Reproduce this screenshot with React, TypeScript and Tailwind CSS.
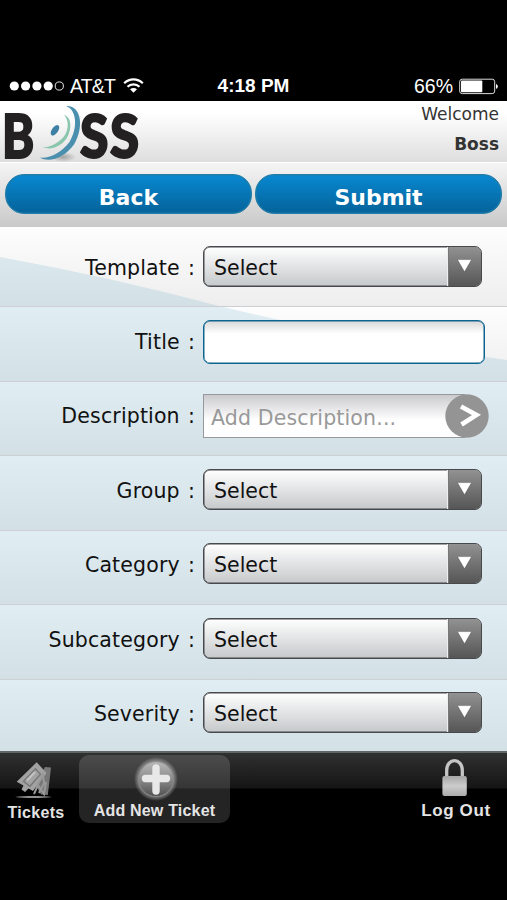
import { useState } from 'react'

interface Field {
  label: string
  kind: 'select' | 'input' | 'link'
}

const fields: Field[] = [
  { label: 'Template', kind: 'select' },
  { label: 'Title', kind: 'input' },
  { label: 'Description', kind: 'link' },
  { label: 'Group', kind: 'select' },
  { label: 'Category', kind: 'select' },
  { label: 'Subcategory', kind: 'select' },
  { label: 'Severity', kind: 'select' },
]

function StatusBar() {
  return (
    <div className="grid h-[101px] grid-cols-3 items-end bg-black px-[9px] pb-[5px] font-['Liberation_Sans'] text-[19.5px] leading-5 text-white">
      <div className="flex items-center whitespace-nowrap">
        <svg width="56" height="12" viewBox="0 0 56 12" fill="#fff">
          <circle cx="5.3" cy="6" r="4.6" />
          <circle cx="16.6" cy="6" r="4.6" />
          <circle cx="27.9" cy="6" r="4.6" />
          <circle cx="39.2" cy="6" r="4.6" />
          <circle cx="50.3" cy="6" r="4.1" fill="none" stroke="#fff" strokeWidth="0.9" />
        </svg>
        <span className="ml-[5px] tracking-[-0.8px]">AT&amp;T</span>
        <svg className="ml-[8px]" width="21" height="16" viewBox="0 0 21 16" fill="none" stroke="#fff" strokeWidth="2.2">
          <path d="M1.2 5.2C6.5.1 14.5.1 19.8 5.2" />
          <path d="M4.5 8.8c3.4-3.3 8.6-3.3 12 0" />
          <path d="M10.5 14.8 7 11.3c2-1.8 5-1.8 7 0z" fill="#fff" stroke="none" />
        </svg>
      </div>
      <div className="text-center text-[19px] font-bold text-white">4:18 PM</div>
      <div className="flex items-center justify-end">
        <span className="mr-[6px]">66%</span>
        <svg width="39" height="17" viewBox="0 0 39 17">
          <rect x="0.7" y="1.2" width="35" height="14.4" rx="2.5" fill="none" stroke="#ddd" />
          <rect x="2" y="2.5" width="21.3" height="11.8" rx="0.8" fill="#fff" />
          <path d="M37 6c2.4.7 2.4 4.1 0 4.8z" fill="#fff" />
        </svg>
      </div>
    </div>
  )
}

function Logo() {
  return (
    <svg className="overflow-visible" width="145" height="61" viewBox="0 0 145 61">
      <defs>
        <radialGradient id="shade">
          <stop offset="0" stopColor="#777" stopOpacity="0.6" />
          <stop offset="1" stopColor="#777" stopOpacity="0" />
        </radialGradient>
      </defs>
      <ellipse cx="63" cy="56" rx="13" ry="5" fill="url(#shade)" />
      <g fontFamily="Lato" fontWeight="900" fontSize="60" fill="#242122" stroke="#242122" strokeWidth="2">
        <text transform="translate(2 57.2) scale(.81 1.02)">B</text>
        <text transform="translate(80 57.2) scale(.86 1.02)">S</text>
        <text transform="translate(110 57.2) scale(.88 1.02)">S</text>
      </g>
      <ellipse cx="55" cy="29.3" rx="3.1" ry="6" transform="rotate(35 55 29.3)" fill="#3e81a5" />
      <path d="M64 14C72 16 72 29 66.500 37.500 61 45 51 50 43 46 50 47 58 42 64 35.500 69 28 69 19 64 14z" fill="#8ac5ad" />
      <path d="M66 5C82 4 84 27 74 43.500 65 56 50 62.500 39.500 56.500 50 58 62 51 69.500 41 78 27 77 9 66 5z" fill="#4b8fae" />
    </svg>
  )
}

function SelectBox({ label }: { label: string }) {
  return (
    <button
      aria-label={label}
      className="flex h-[41px] w-[279px] items-stretch overflow-hidden rounded-[7px] border border-[#48494c] bg-linear-to-b from-white to-[#c6c9cb] text-left shadow-[inset_0_0_0_0.5px_#48494c]"
    >
      <span className="flex-1 pl-[10px] leading-[42px]">Select</span>
      <span className="flex w-[33px] justify-center border-l border-[#77787a] bg-linear-to-b from-[#929292] to-[#565656] pt-[12px] pr-[2px] shadow-[-1px_0_0_#eee]">
        <svg width="15" height="13" viewBox="0 0 15 13">
          <path d="M.4.6h14.2L7.5 12.8z" fill="#fff" stroke="#4a4a4a" strokeWidth="0.4" />
        </svg>
      </span>
    </button>
  )
}

function DescriptionLink() {
  return (
    <button className="flex h-[44px] w-[286px] items-center text-left">
      <span className="h-[44px] w-[262px] border border-[#96989b] bg-linear-to-b from-[#cbcbcf] to-white to-60% pl-[7px] leading-[46px] tracking-[0.15px] text-[#999]">
        Add Description...
      </span>
      <svg className="-ml-[20px] shrink-0" width="44" height="44" viewBox="0 0 44 44">
        <circle cx="22" cy="22" r="21.7" fill="#949494" />
        <path d="M16 12.5 31.5 21 16.5 30.5" fill="none" stroke="#fff" strokeWidth="4.6" />
      </svg>
    </button>
  )
}

function FormRow({ field, first }: { field: Field; first: boolean }) {
  const [value, setValue] = useState('')

  return (
    <div
      className={`relative flex items-start border-b border-[#cdcfd2] bg-linear-to-b from-transparent to-black/6 ${
        first ? 'h-[80.5px] pt-[19px]' : 'h-[74.5px] pt-[12.5px]'
      }`}
    >
      <label className="w-[196px] pr-[1px] text-right leading-[44px] tracking-[0.15px] [word-spacing:1.5px]">{field.label} :</label>
      <div className="ml-[7px]">
        {field.kind === 'select' && <SelectBox label={field.label} />}
        {field.kind === 'input' && (
          <input
            value={value}
            onChange={(e) => setValue(e.target.value)}
            className="block h-[44px] w-[282px] rounded-[7px] border border-[#0e648f] bg-linear-to-b from-[#d8d8d8] to-white to-30% px-2 shadow-[inset_0_0_0_0.5px_#0e648f]"
          />
        )}
        {field.kind === 'link' && <DescriptionLink />}
      </div>
    </div>
  )
}

function TabBar() {
  return (
    <div className="relative flex h-[149px] items-start border-t-2 border-[#606568] bg-[linear-gradient(#303030_0px,#151515_35px,#000_36px)] bg-no-repeat font-['Liberation_Sans'] text-[16px] font-bold leading-[18px] text-[#e4e4e4]">
      <button className="mt-[7px] flex w-[72px] flex-col items-center">
        <svg width="42" height="40" viewBox="0 0 42 40">
          <path d="M30 7 36 7.5 32.8 35 26 34.5 20 24z" fill="#777" />
          <path d="M21.7 2.3 31.5 13 18 31 13.5 28.5 10 32 6.5 29.5 8.5 25.5 1.7 21.7z" fill="#a2a2a2" />
          <path d="m8.5 21.5 12-12.8 5 5.5-10.5 12z" fill="none" stroke="#777" strokeWidth="1.4" />
          <path d="m12 20.5 8-8.5" stroke="#c2c2c2" strokeWidth="2.2" />
          <path d="m22 26 6-11.5 1 8.5-5 10M19 34l4-9 6 9 2-12" stroke="#999" strokeWidth="2" fill="none" />
          <path d="M0 37c10-1.2 26-1.2 37 0-10 1.4-27 1.4-37 0z" fill="#909090" />
        </svg>
        <span className="mt-[4px] tracking-[0.3px]">Tickets</span>
      </button>
      <button className="ml-[7px] mt-[2px] flex h-[68px] w-[151px] flex-col items-center rounded-[10px] bg-white/14">
        <svg width="46" height="46" viewBox="0 0 46 46">
          <defs>
            <radialGradient id="glow">
              <stop offset="0.75" stopColor="#bbb" stopOpacity="0.7" />
              <stop offset="1" stopColor="#bbb" stopOpacity="0" />
            </radialGradient>
            <linearGradient id="disc" x1="0" y1="0" x2="0" y2="1">
              <stop offset="0" stopColor="#b8b8b8" />
              <stop offset="0.5" stopColor="#8c8c8c" />
              <stop offset="1" stopColor="#505050" />
            </linearGradient>
          </defs>
          <circle cx="24" cy="24" r="22" fill="url(#glow)" />
          <circle cx="24" cy="24" r="17.5" fill="url(#disc)" stroke="#888" />
          <path d="M24 13v23M13.5 23.5h21" stroke="#e8e8e8" strokeWidth="7.4" strokeLinecap="round" />
        </svg>
        <span className="mt-[1px] tracking-[0.2px]">Add New Ticket</span>
      </button>
      <button className="ml-auto mt-[5px] flex w-[102px] flex-col items-center">
        <svg width="28" height="40" viewBox="0 0 28 40">
          <defs>
            <linearGradient id="lock" x1="0" y1="0" x2="0" y2="1">
              <stop offset="0" stopColor="#a6a6a6" />
              <stop offset="0.5" stopColor="#ccc" />
              <stop offset="1" stopColor="#aaa" />
            </linearGradient>
          </defs>
          <path d="M4.7 20v-7.5C4.7-.6 20.3-.6 20.3 12.5V20" fill="none" stroke="#c5c5c5" strokeWidth="3.3" />
          <rect x="0.4" y="18" width="24.4" height="20" rx="2" fill="url(#lock)" />
        </svg>
        <span className="mt-[4px] text-[17px] tracking-[0.6px]">Log Out</span>
      </button>
    </div>
  )
}

export default function App() {
  return (
    <div className="h-[900px] w-[507px] overflow-hidden bg-black font-['DejaVu_Sans',sans-serif] text-[20.5px] text-[#111]">
      <StatusBar />

      {/* Header */}
      <div className="flex h-[61px] justify-between bg-linear-to-b from-white from-20% to-[#dedede] pr-[8px]">
        <Logo />
        <div className="text-right text-[17px] leading-[30px] text-[#333]">
          <div className="-mt-[2px]">Welcome</div>
          <div className="font-bold">Boss</div>
        </div>
      </div>

      {/* Actions */}
      <div className="flex h-[64.5px] items-start gap-[3px] border-t border-white bg-linear-to-b from-[#f5f5f5] to-[#c9c9c9] px-[5px] pt-[11px] text-[22px] font-bold leading-[45px] text-white">
        <button className="h-[40px] flex-1 rounded-[19px] border border-[#237da8] bg-linear-to-b from-[#0888d1] to-[#05639a] shadow-[inset_0_0_0_0.5px_#237da8]">Back</button>
        <button className="h-[40px] flex-1 rounded-[19px] border border-[#237da8] bg-linear-to-b from-[#0888d1] to-[#05639a] shadow-[inset_0_0_0_0.5px_#237da8]">Submit</button>
      </div>

      {/* Form */}
      <div className="relative h-[524.5px] overflow-hidden bg-[#e0eef4]">
        <svg className="absolute left-0 top-0" width="507" height="140" viewBox="0 0 507 140">
          <path d="M0 0h507v133Q350 111 215 78 110 50 0 30z" fill="#fdfdfd" />
        </svg>
        {fields.map((field, i) => (
          <FormRow key={field.label} field={field} first={i === 0} />
        ))}
      </div>

      <TabBar />
    </div>
  )
}
